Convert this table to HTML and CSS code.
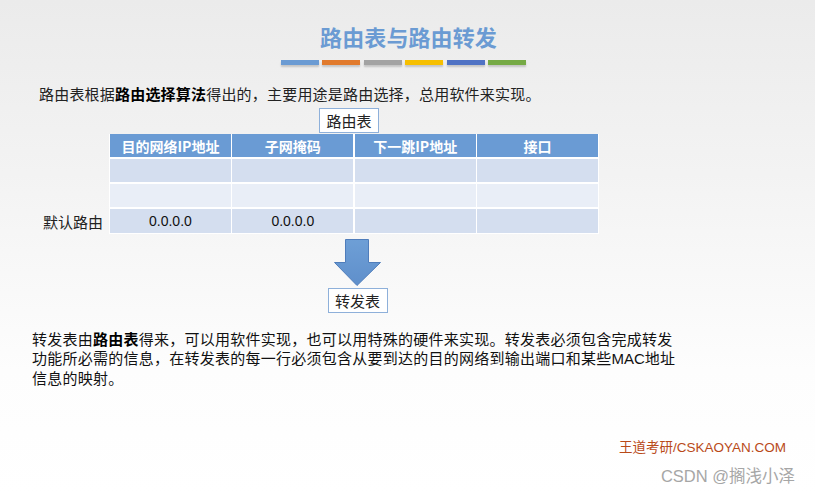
FILE: index.html
```html
<!DOCTYPE html>
<html lang="zh">
<head>
<meta charset="utf-8">
<title>路由表与路由转发</title>
<link rel="stylesheet" href="styles.css">
</head>
<body>
<div class="page">
  <header class="head">
    <h1 class="title">路由表与路由转发</h1>
    <div class="bars">
      <span class="bar b1"></span><span class="bar b2"></span><span class="bar b3"></span><span class="bar b4"></span><span class="bar b5"></span><span class="bar b6"></span>
    </div>
  </header>

  <p class="intro">路由表根据<b>路由选择算法</b>得出的，主要用途是路由选择，总用软件来实现。</p>

  <section class="routing">
    <div class="caption-row"><span class="box cap">路由表</span></div>
    <div class="grid">
      <div class="label"></div>
      <div class="tbl">
        <div class="th">目的网络IP地址</div><div class="th">子网掩码</div><div class="th">下一跳IP地址</div><div class="th">接口</div>
        <div class="td a"></div><div class="td a"></div><div class="td a"></div><div class="td a"></div>
        <div class="td b"></div><div class="td b"></div><div class="td b"></div><div class="td b"></div>
        <div class="td a last">0.0.0.0</div><div class="td a last">0.0.0.0</div><div class="td a last"></div><div class="td a last"></div>
      </div>
      <div class="label side">默认路由</div>
    </div>
    <div class="flow">
      <svg class="arrow" width="49" height="49" viewBox="0 0 49 49">
        <defs>
          <linearGradient id="ag" x1="0" y1="0" x2="0" y2="1">
            <stop offset="0" stop-color="#6e9fd6"/>
            <stop offset="1" stop-color="#5f8fcb"/>
          </linearGradient>
        </defs>
        <path d="M12.5 0.5 H35.5 V23.5 H47.5 L24 46.5 L1.5 23.5 H12.5 Z" fill="url(#ag)" stroke="#4f7dbb" stroke-width="1"/>
      </svg>
      <span class="box out">转发表</span>
    </div>
  </section>

  <p class="desc">转发表由<b>路由表</b>得来，可以用软件实现，也可以用特殊的硬件来实现。转发表必须包含完成转发<br>功能所必需的信息，在转发表的每一行必须包含从要到达的目的网络到输出端口和某些<span class="lat">MAC</span>地址<br>信息的映射。</p>

  <footer class="foot">
    <div class="brand">王道考研/CSKAOYAN.COM</div>
    <div class="wm">CSDN @搁浅小泽</div>
  </footer>
</div>
</body>
</html>
```

FILE: styles.css
```css
* { box-sizing: border-box; }
html, body { margin: 0; padding: 0; }
body {
  width: 815px;
  height: 494px;
  overflow: hidden;
  background: linear-gradient(180deg, #ebebeb 0%, #f3f3f3 35%, #fdfdfd 75%, #ffffff 100%);
  font-family: "Noto Sans CJK SC", "Noto Sans", sans-serif;
  color: #222;
}
.page { position: relative; height: 494px; }

.head { padding-top: 21px; display: flex; flex-direction: column; align-items: center; }
.title {
  margin: 0;
  font-size: 22px;
  line-height: 30px;
  font-weight: 700;
  color: #6b9bd3;
  letter-spacing: 0.1px;
  padding-left: 2px;
}
.bars { display: flex; gap: 3.5px; margin-top: 9px; padding-right: 8px; }
.bar { width: 38px; height: 5px; box-shadow: 0 2px 2px rgba(0,0,0,0.18); }
.b1 { background: #6b9bd3; }
.b2 { background: #e17a2c; }
.b3 { background: #a3a3a3; }
.b4 { background: #f6bf00; }
.b5 { background: #4f72c4; }
.b6 { background: #76aa45; }

.intro {
  margin: 19px 0 0 39px;
  font-size: 15px;
  line-height: 20px;
  letter-spacing: 0.2px;
  color: #222;
}
.intro b, .desc b { font-weight: 700; color: #000; }

.routing { margin-top: 4px; }
.caption-row { padding-left: 319px; height: 26px; }
.box {
  display: inline-flex;
  align-items: center;
  justify-content: center;
  background: #fff;
  border: 1px solid #8eb0da;
  font-size: 15px;
  color: #222;
}
.cap { width: 60px; height: 25px; }

.grid { display: grid; grid-template-columns: 109px 490px; grid-template-rows: auto; }
.label { grid-column: 1; grid-row: 1; }
.side {
  align-self: end;
  text-align: right;
  padding-right: 6px;
  font-size: 15px;
  line-height: 25px;
  height: 25px;
  color: #222;
}
.tbl {
  grid-column: 2; grid-row: 1;
  display: grid;
  grid-template-columns: repeat(4, 1fr);
  grid-template-rows: 23px 23px 23px 24px;
  column-gap: 1.5px;
  row-gap: 2px;
  background: #fff;
  padding: 0 1px 1px 1px;
  width: 490px;
}
.th {
  background: #6a9bd4;
  color: #fff;
  font-weight: 700;
  font-size: 14px;
  display: flex; align-items: center; justify-content: center;
}
.td {
  font-family: "Liberation Sans", "Noto Sans", sans-serif;
  font-size: 14px;
  color: #111;
  display: flex; align-items: center; justify-content: center;
}
.a { background: #d4deef; }
.b { background: #e9eef7; }

.flow { display: flex; flex-direction: column; align-items: center; width: 715px; margin-top: 5px; }
.arrow { display: block; margin-left: 0; }
.out { width: 60px; height: 25px; margin-top: 0; }

.desc {
  margin: 16px 0 0 32px;
  font-size: 15px;
  line-height: 19px;
  letter-spacing: 0.25px;
  color: #111;
}
.lat { font-family: "Liberation Sans", sans-serif; letter-spacing: 0; }

.foot {
  position: absolute;
  right: 20px;
  bottom: 8px;
  display: flex; flex-direction: column; align-items: flex-end;
}
.brand {
  font-family: "Liberation Sans", "Noto Sans CJK SC", sans-serif;
  font-size: 13.5px;
  line-height: 16px;
  color: #b94a19;
  margin-right: 9px;
}
.wm {
  margin-top: 11px;
  font-family: "Liberation Sans", "Noto Sans CJK SC", sans-serif;
  font-size: 16.5px;
  line-height: 19px;
  color: #a6a6a6;
}
```
